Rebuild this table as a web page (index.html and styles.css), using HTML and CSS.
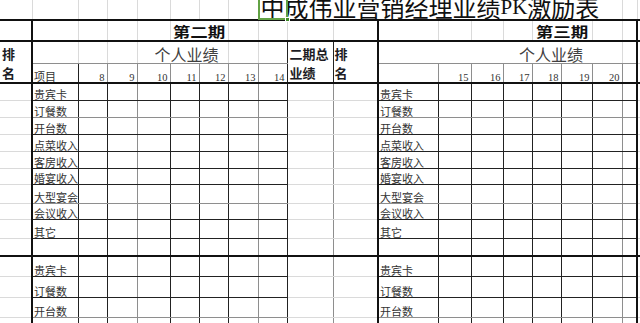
FILE: index.html
```html
<!DOCTYPE html>
<html lang="zh-CN">
<head>
<meta charset="utf-8">
<title>中成伟业营销经理业绩PK激励表</title>
<link rel="stylesheet" href="styles.css">
</head>
<body>
<table class="sheet">
<colgroup>
<col class="w32"><col class="w46"><col class="w29"><col class="w30"><col class="w33"><col class="w29"><col class="w29"><col class="w30"><col class="w29"><col class="w46"><col class="w45"><col class="w60"><col class="w33"><col class="w32"><col class="w29"><col class="w29"><col class="w31"><col class="w30"><col class="w15"><col class="w40">
</colgroup>
<tr class="r1 h20">
<td></td><td></td><td></td><td></td><td></td><td></td><td></td><td></td>
<td class="sel"><div class="title">中成伟业营销经理业绩<span class="pk">PK</span>激励表</div><div class="selbox"><span class="handle"></span></div></td>
<td class="nr"></td><td class="nr"></td><td class="nr"></td><td class="nr"></td><td class="nr"></td><td class="nr"></td><td class="nr"></td><td class="nr"></td>
<td></td><td></td><td></td>
</tr>
<tr class="r2 h21">
<td class="rth"></td><td></td><td></td><td></td><td></td>
<td colspan="2" class="period"><span class="ptext">第二期</span></td>
<td></td><td></td><td></td><td class="rth"></td>
<td></td><td></td><td></td><td></td>
<td colspan="2" class="period"><span class="ptext">第三期</span></td>
<td></td><td class="rth"></td><td></td>
</tr>
<tr class="h22">
<td rowspan="2" class="rank rth bth"><div>排</div><div>名</div></td>
<td class="bmd"></td><td class="bmd"></td><td class="bmd"></td>
<td colspan="3" class="bmd perf perf-l">个人业绩</td>
<td class="bmd"></td><td class="bmd rdk"></td>
<td rowspan="2" class="rank tot rdk bth"><div>二期总</div><div>业绩</div></td>
<td rowspan="2" class="rank rank-k rth bth"><div>排</div><div>名</div></td>
<td colspan="7" class="bmd perf perf-r">个人业绩</td>
<td class="rth bmd"></td><td></td>
</tr>
<tr class="r4 h20">
<td class="rdk lbl">项目</td>
<td class="rmd num">8</td><td class="rmd num">9</td><td class="rmd num">10</td><td class="rmd num">11</td><td class="rmd num">12</td><td class="rmd num">13</td>
<td class="rdk num">14</td>
<td class="rmd"></td>
<td class="rmd num">15</td><td class="rmd num">16</td><td class="rmd num">17</td><td class="rmd num">18</td><td class="rmd num">19</td><td class="rmd num">20</td>
<td class="rth"></td><td></td>
</tr>
<tr class="data h17"><td></td><td class="lbl">贵宾卡</td><td></td><td></td><td></td><td></td><td></td><td></td><td></td><td></td><td></td><td class="lbl">贵宾卡</td><td></td><td></td><td></td><td></td><td></td><td></td><td></td><td></td></tr>
<tr class="data gl h17"><td></td><td class="lbl">订餐数</td><td></td><td></td><td></td><td></td><td></td><td></td><td></td><td></td><td></td><td class="lbl">订餐数</td><td></td><td></td><td></td><td></td><td></td><td></td><td></td><td></td></tr>
<tr class="data h17"><td></td><td class="lbl">开台数</td><td></td><td></td><td></td><td></td><td></td><td></td><td></td><td></td><td></td><td class="lbl">开台数</td><td></td><td></td><td></td><td></td><td></td><td></td><td></td><td></td></tr>
<tr class="data h17"><td></td><td class="lbl">点菜收入</td><td></td><td></td><td></td><td></td><td></td><td></td><td></td><td></td><td></td><td class="lbl">点菜收入</td><td></td><td></td><td></td><td></td><td></td><td></td><td></td><td></td></tr>
<tr class="data h17"><td></td><td class="lbl">客房收入</td><td></td><td></td><td></td><td></td><td></td><td></td><td></td><td></td><td></td><td class="lbl">客房收入</td><td></td><td></td><td></td><td></td><td></td><td></td><td></td><td></td></tr>
<tr class="data h16"><td></td><td class="lbl">婚宴收入</td><td></td><td></td><td></td><td></td><td></td><td></td><td></td><td></td><td></td><td class="lbl">婚宴收入</td><td></td><td></td><td></td><td></td><td></td><td></td><td></td><td></td></tr>
<tr class="data gl h19"><td></td><td class="lbl">大型宴会</td><td></td><td></td><td></td><td></td><td></td><td></td><td></td><td></td><td></td><td class="lbl">大型宴会</td><td></td><td></td><td></td><td></td><td></td><td></td><td></td><td></td></tr>
<tr class="data h16"><td></td><td class="lbl">会议收入</td><td></td><td></td><td></td><td></td><td></td><td></td><td></td><td></td><td></td><td class="lbl">会议收入</td><td></td><td></td><td></td><td></td><td></td><td></td><td></td><td></td></tr>
<tr class="data h19"><td></td><td class="lbl">其它</td><td></td><td></td><td></td><td></td><td></td><td></td><td></td><td></td><td></td><td class="lbl">其它</td><td></td><td></td><td></td><td></td><td></td><td></td><td></td><td></td></tr>
<tr class="data tb h18"><td></td><td></td><td></td><td></td><td></td><td></td><td></td><td></td><td></td><td></td><td></td><td></td><td></td><td></td><td></td><td></td><td></td><td></td><td></td><td></td></tr>
<tr class="data h20"><td></td><td class="lbl">贵宾卡</td><td></td><td></td><td></td><td></td><td></td><td></td><td></td><td></td><td></td><td class="lbl">贵宾卡</td><td></td><td></td><td></td><td></td><td></td><td></td><td></td><td></td></tr>
<tr class="data h21"><td></td><td class="lbl">订餐数</td><td></td><td></td><td></td><td></td><td></td><td></td><td></td><td></td><td></td><td class="lbl">订餐数</td><td></td><td></td><td></td><td></td><td></td><td></td><td></td><td></td></tr>
<tr class="data gl h20"><td></td><td class="lbl">开台数</td><td></td><td></td><td></td><td></td><td></td><td></td><td></td><td></td><td></td><td class="lbl">开台数</td><td></td><td></td><td></td><td></td><td></td><td></td><td></td><td></td></tr>
<tr class="data h20"><td></td><td></td><td></td><td></td><td></td><td></td><td></td><td></td><td></td><td></td><td></td><td></td><td></td><td></td><td></td><td></td><td></td><td></td><td></td><td></td></tr>
</table>
</body>
</html>
```

FILE: styles.css
```css
* { box-sizing: border-box; }
html, body { margin: 0; padding: 0; background: #fff; }
body {
  overflow: hidden;
  font-family: "Noto Sans CJK SC", "Noto Sans", sans-serif;
  color: #2a2a2a;
}

.sheet {
  border-collapse: collapse;
  table-layout: fixed;
  width: 677px;
}
.w15 { width: 15px; } .w29 { width: 29px; } .w30 { width: 30px; }
.w31 { width: 31px; } .w32 { width: 32px; } .w33 { width: 33px; }
.w40 { width: 40px; } .w45 { width: 45px; } .w46 { width: 46px; }
.w60 { width: 60px; }

.h16 { height: 16px; } .h17 { height: 17px; } .h18 { height: 18px; }
.h19 { height: 19px; } .h20 { height: 20px; } .h21 { height: 21px; }
.h22 { height: 22px; }

.sheet td {
  padding: 0;
  border-top: none;
  border-left: none;
  border-right: 1px solid #dadada;
  border-bottom: 1px solid #dadada;
  vertical-align: bottom;
  white-space: nowrap;
  overflow: visible;
  font-size: 11px;
  line-height: 11px;
}

/* header borders */
.sheet .r1 td, .sheet .r2 td, .sheet .r4 td { border-bottom: 2px solid #111; }
.sheet .nr { border-right: none; }
.sheet .rth { border-right: 2px solid #111; }
.sheet .rdk { border-right: 1px solid #222; }
.sheet .rmd { border-right: 1px solid #8e8e8e; }
.sheet .bth { border-bottom: 2px solid #111; }
.sheet .bmd { border-bottom: 1px solid #8e8e8e; }

/* title + selection */
.sheet .sel { position: relative; }
.title {
  height: 18px;
  padding-left: 2px;
  font-size: 24px;
  line-height: 12px;
  color: #111;
}
.pk {
  font-family: "Liberation Serif", serif;
  font-size: 21px;
  vertical-align: 3px;
}
.selbox {
  position: absolute;
  left: -1px;
  top: -2px;
  right: -1px;
  bottom: -1px;
  border: 2px solid #62a244;
}
.handle {
  position: absolute;
  right: -4px;
  bottom: -4px;
  width: 5px;
  height: 5px;
  background: #3f8a2a;
  border: 1px solid #fff;
}

/* period headings */
.sheet .period { text-align: center; padding-bottom: 2px; }
.ptext {
  display: inline-block;
  font-size: 14px;
  line-height: 14px;
  font-weight: bold;
  color: #111;
  transform: scaleX(1.25);
}

.sheet .perf {
  font-size: 16px;
  line-height: 16px;
  color: #404040;
  padding-bottom: 1px;
}
.sheet .perf-l { padding-left: 17px; }
.sheet .perf-r { padding-left: 140px; }

.sheet .rank {
  font-size: 13px;
  line-height: 19px;
  font-weight: bold;
  color: #1c1c24;
  padding-left: 2px;
}
.sheet .rank-k { padding-left: 1px; }

.sheet .num {
  text-align: right;
  padding-right: 2px;
  font-family: "Liberation Serif", serif;
  font-size: 10.5px;
  line-height: 8px;
  color: #333;
}
.sheet .lbl { padding-left: 1px; color: #333; }

/* data rows */
.sheet .data td { border-bottom: 1px solid #222; }
.sheet .data.gl td { border-bottom-color: #8e8e8e; }
.sheet .data td:nth-child(1) { border-right: 2px solid #111; border-bottom-color: #dadada; }
.sheet .data td:nth-child(2),
.sheet .data td:nth-child(3),
.sheet .data td:nth-child(5),
.sheet .data td:nth-child(6),
.sheet .data td:nth-child(7),
.sheet .data td:nth-child(9),
.sheet .data td:nth-child(12),
.sheet .data td:nth-child(13),
.sheet .data td:nth-child(14),
.sheet .data td:nth-child(15),
.sheet .data td:nth-child(16),
.sheet .data td:nth-child(17) { border-right-color: #222; }
.sheet .data td:nth-child(4),
.sheet .data td:nth-child(8),
.sheet .data td:nth-child(18) { border-right-color: #8e8e8e; }
.sheet .data td:nth-child(10) { border-right-color: #8e8e8e; border-bottom-color: #dadada; }
.sheet .data td:nth-child(11) { border-right: 2px solid #111; border-bottom-color: #dadada; }
.sheet .data td:nth-child(19) { border-right: 2px solid #111; }
.sheet .data td:nth-child(20) { border-bottom-color: #dadada; }
.sheet .data.tb td { border-bottom: 2px solid #111; }
```
